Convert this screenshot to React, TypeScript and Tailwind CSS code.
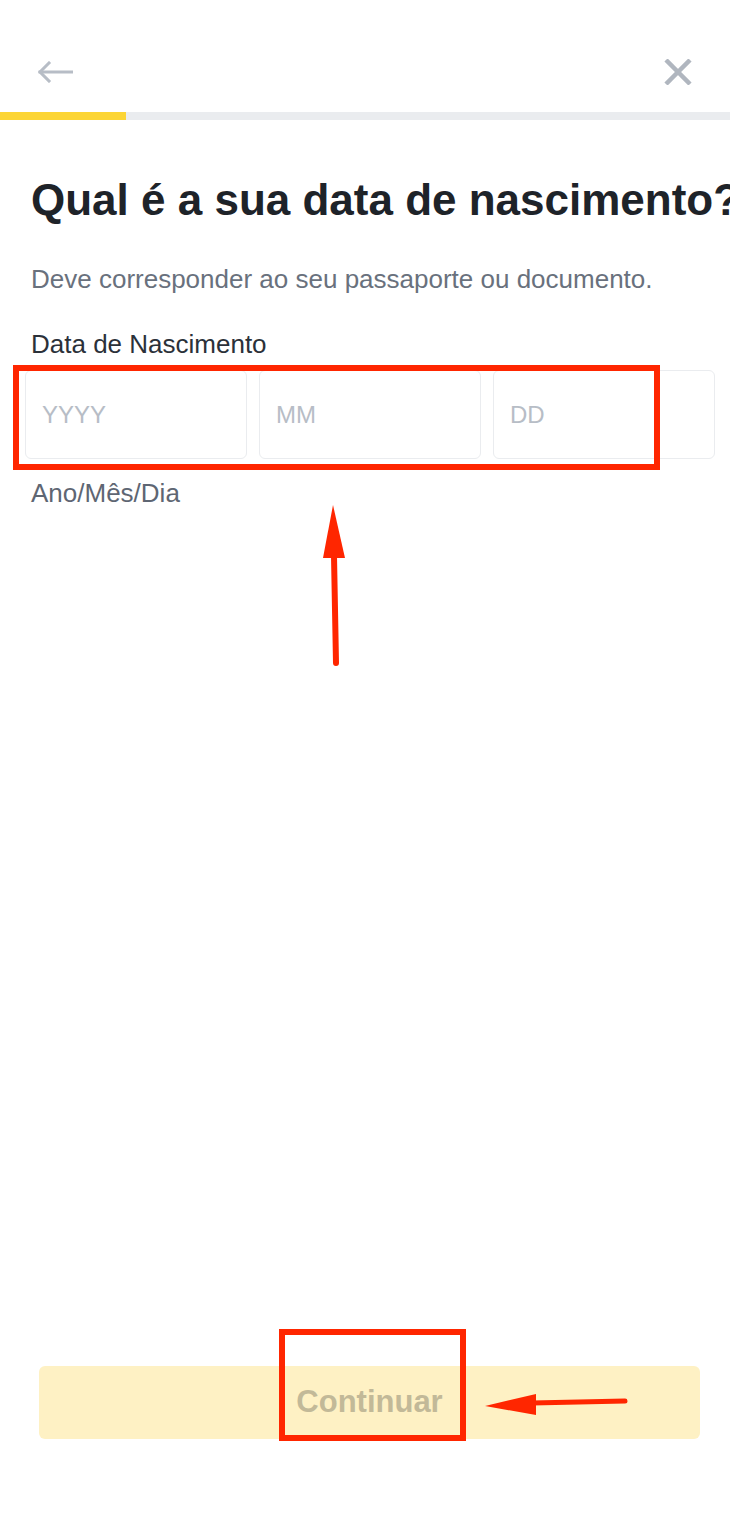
import React from 'react';

const font = { fontFamily: '"Liberation Sans", Arial, sans-serif' };

const DateBox: React.FC<{ placeholder: string }> = ({ placeholder }) => (
  <div className="w-[222px] h-[89px] shrink-0 rounded-[6px] border border-[#eaecef] bg-white flex items-center pl-[16px]">
    <span className="text-[24px] leading-[24px] text-[#b7bdc6]">{placeholder}</span>
  </div>
);

const BirthDate: React.FC = () => {
  return (
    <div className="relative w-[730px] h-[1518px] bg-white overflow-hidden flex flex-col" style={font}>
      {/* header */}
      <div className="h-[112px] flex items-center justify-between pt-[32px] pl-[37px] pr-[38px]">
        <svg width="36" height="22" viewBox="0 0 36 22" fill="none" stroke="#b7bdc6" strokeWidth="3" strokeLinecap="square">
          <path d="M35 11H3" />
          <path d="M12 2L3 11L12 20" />
        </svg>
        <svg width="28" height="26" viewBox="0 0 28 26" fill="none" stroke="#b0b6bf" strokeWidth="4.5">
          <path d="M2 1L26 25" />
          <path d="M26 1L2 25" />
        </svg>
      </div>

      {/* progress */}
      <div className="h-[8px] bg-[#eaecef] flex">
        <div className="w-[126px] h-full bg-[#fcd535]" />
      </div>

      <div className="flex-1 flex flex-col">
        <h1 className="mt-[58px] pl-[31px] text-[44px] leading-[44px] font-bold text-[#1e2329] whitespace-nowrap">
          Qual é a sua data de nascimento?
        </h1>
        <p className="mt-[44px] pl-[31px] text-[26px] leading-[26px] text-[#69717d]">
          Deve corresponder ao seu passaporte ou documento.
        </p>
        <p className="mt-[39px] pl-[31px] text-[26px] leading-[26px] text-[#2b3139]">Data de Nascimento</p>
        <div className="mt-[13px] pl-[25px] flex gap-[12px]">
          <DateBox placeholder="YYYY" />
          <DateBox placeholder="MM" />
          <DateBox placeholder="DD" />
        </div>
        <p className="mt-[21px] pl-[31px] text-[26px] leading-[26px] text-[#5e6673]">Ano/Mês/Dia</p>
      </div>

      {/* footer button */}
      <div className="pl-[39px] pr-[30px] pb-[79px]">
        <button className="w-full h-[73px] rounded-[6px] bg-[#fef1c4] flex items-center justify-center text-[31px] font-bold text-[#c2b998]">
          Continuar
        </button>
      </div>

      {/* red annotations */}
      <svg className="absolute inset-0 pointer-events-none" width="730" height="1518" viewBox="0 0 730 1518">
        <rect x="16" y="368" width="641" height="99" fill="none" stroke="#ff2600" strokeWidth="6" />
        <path d="M336 663L334 556" stroke="#ff2600" strokeWidth="6" strokeLinecap="round" />
        <path d="M333 505L345 558H323Z" fill="#ff2600" />
        <rect x="282" y="1332" width="181" height="106" fill="none" stroke="#ff2600" strokeWidth="6" />
        <path d="M625 1401L532 1403" stroke="#ff2600" strokeWidth="5" strokeLinecap="round" />
        <path d="M485 1406L536 1394L536 1415Z" fill="#ff2600" />
      </svg>
    </div>
  );
};

export default function App() {
  return <BirthDate />;
}
